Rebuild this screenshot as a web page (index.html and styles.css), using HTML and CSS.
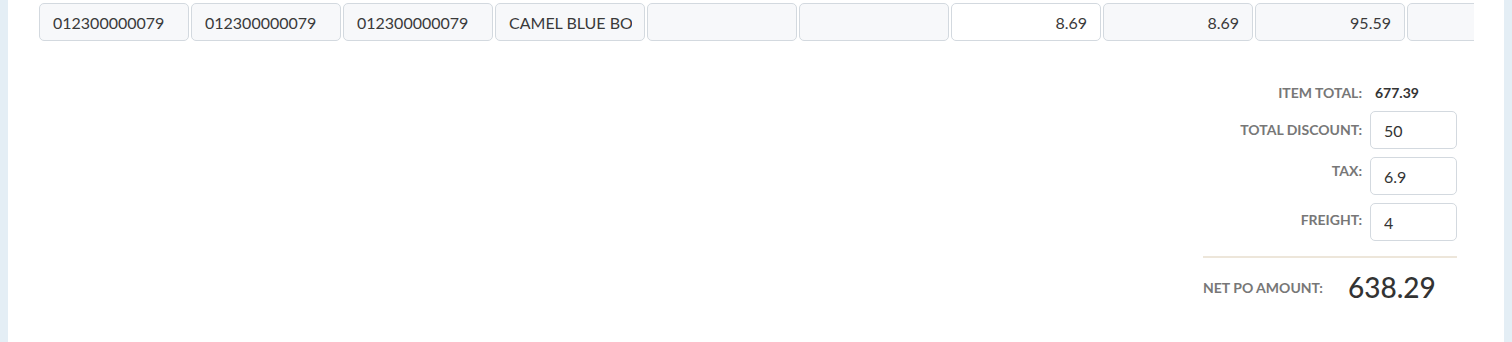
FILE: index.html
```html
<!DOCTYPE html>
<html>
<head>
<meta charset="utf-8">
<link rel="stylesheet" href="styles.css">
</head>
<body>
<div class="panel">
  <div class="line-scroll">
    <div class="line-row">
      <input class="cell" type="text" readonly value="012300000079">
      <input class="cell" type="text" readonly value="012300000079">
      <input class="cell" type="text" readonly value="012300000079">
      <input class="cell" type="text" readonly value="CAMEL BLUE BOX KING">
      <input class="cell" type="text" readonly value="">
      <input class="cell" type="text" readonly value="">
      <input class="cell cell-edit num" type="text" value="8.69">
      <input class="cell num" type="text" readonly value="8.69">
      <input class="cell num" type="text" readonly value="95.59">
      <input class="cell" type="text" readonly value="">
    </div>
  </div>

  <div class="summary-wrap">
    <div class="summary">
      <div class="sum-grid">
        <div class="sum-label">ITEM TOTAL:</div>
        <div class="sum-value">677.39</div>

        <div class="sum-label field-label">TOTAL DISCOUNT:</div>
        <input class="sum-input" type="text" value="50">

        <div class="sum-label field-label tax">TAX:</div>
        <input class="sum-input" type="text" value="6.9">

        <div class="sum-label field-label freight">FREIGHT:</div>
        <input class="sum-input" type="text" value="4">
      </div>
      <div class="net-row">
        <div class="net-label">NET PO AMOUNT:</div>
        <div class="net-value">638.29</div>
      </div>
    </div>
  </div>
</div>
</body>
</html>
```

FILE: styles.css
```css
html, body {
  margin: 0;
  padding: 0;
  height: 100%;
}

body {
  background: #e4eef5;
  font-family: Lato, "Open Sans", sans-serif;
  color: #333;
}

.panel {
  margin: 0 8px;
  height: 342px;
  background: #ffffff;
  box-sizing: border-box;
  padding-top: 3px;
}

.line-scroll {
  margin-left: 31px;
  width: 1435px;
  overflow: hidden;
}

.line-row {
  display: flex;
  gap: 2px;
  width: max-content;
}

.cell {
  box-sizing: border-box;
  width: 150px;
  height: 38px;
  margin: 0;
  padding: 0 12px 0 13px;
  border: 1px solid #d3d9df;
  border-radius: 5px;
  background: #f7f8fa;
  font-family: Lato, "Open Sans", sans-serif;
  font-size: 16px;
  color: #3a3a3a;
  outline: none;
}

.cell-edit {
  background: #ffffff;
}

.num {
  text-align: right;
  padding-right: 13px;
}

.summary-wrap {
  display: flex;
  justify-content: flex-end;
  padding-right: 47px;
  margin-top: 42px;
}

.summary {
  width: 254px;
}

.sum-grid {
  display: grid;
  grid-template-columns: 159px 87px;
  column-gap: 8px;
  row-gap: 8px;
  align-items: center;
}

.sum-label {
  text-align: right;
  font-size: 14px;
  font-weight: 700;
  color: #777777;
  line-height: 20px;
}

.sum-value {
  font-size: 14px;
  font-weight: 700;
  color: #333;
  line-height: 20px;
  padding-left: 5px;
}

.field-label {
  line-height: 18px;
}

.tax {
  align-self: start;
  padding-top: 5px;
}

.freight {
  align-self: start;
  padding-top: 8px;
}

.sum-input {
  box-sizing: border-box;
  width: 87px;
  height: 38px;
  margin: 0;
  padding: 0 13px;
  border: 1px solid #d3d9df;
  border-radius: 5px;
  background: #ffffff;
  font-family: Lato, "Open Sans", sans-serif;
  font-size: 16px;
  color: #333;
  outline: none;
}

.net-row {
  margin-top: 15px;
  border-top: 2px solid #ede6da;
  padding-top: 12px;
  display: flex;
  align-items: center;
}

.net-label {
  width: 145px;
  font-size: 14px;
  font-weight: 700;
  color: #777777;
}

.net-value {
  font-size: 28px;
  font-weight: 500;
  color: #333;
  line-height: 34px;
}
```
